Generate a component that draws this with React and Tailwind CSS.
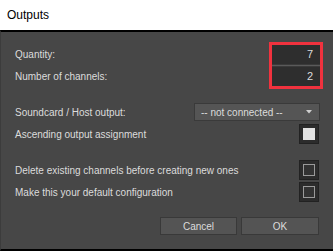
import React from 'react';

function Check({ on }) {
  return (
    <div className="w-[20px] h-[20px] bg-[#2c2c2c] border border-[#222] flex items-center justify-center">
      {on ? (
        <div className="w-[12px] h-[12px] bg-[#e2e2e2]" />
      ) : (
        <div className="w-[12px] h-[12px] border border-[#9a9a9a] bg-[#333]" />
      )}
    </div>
  );
}

function Row({ label, children, className = '' }) {
  return (
    <div className={`flex items-center justify-between ${className}`}>
      <span>{label}</span>
      {children}
    </div>
  );
}

export default function App() {
  return (
    <div className="w-[333px] h-[251px] flex flex-col bg-white overflow-hidden">
      <div className="h-[30px] shrink-0 flex items-center pl-[7px] text-[12px] text-black font-['Liberation_Sans',sans-serif]">
        Outputs
      </div>
      <div className="flex-1 flex flex-col bg-[#474747] border-t-2 border-b-2 border-black border-l border-l-[#3c3c3c] pl-[14px] pr-[14px] pt-[10px] text-[10px] text-[#dcdcdc] font-['Liberation_Sans',sans-serif]">
        {/* quantity + channels */}
        <div className="flex justify-between">
          <div className="flex flex-col pt-[3px] gap-[3px]">
            <div className="h-[19px] flex items-center">Quantity:</div>
            <div className="h-[19px] flex items-center">Number of channels:</div>
          </div>
          <div className="w-[54px] -mr-[4px] border-[3px] border-[#f0323e] flex flex-col">
            <div className="h-[19px] bg-[#2e2e2e] flex items-center justify-end pr-[7px] text-[11px]">7</div>
            <div className="h-[3px] bg-[#5a5a5a] border-y border-[#3a3a3a]" />
            <div className="h-[19px] bg-[#2e2e2e] flex items-center justify-end pr-[7px] text-[11px]">2</div>
          </div>
        </div>

        <Row label="Soundcard / Host output:" className="mt-[14px]">
          <div className="w-[126px] h-[18px] bg-[#555] border border-[#3a3a3a] flex items-center justify-between pl-[6px] pr-[7px] -mr-[1px]">
            <span>-- not connected --</span>
            <svg width="6" height="4" viewBox="0 0 6 4">
              <path d="M0 0h6L3 3.5z" fill="#cfcfcf" />
            </svg>
          </div>
        </Row>

        <Row label="Ascending output assignment" className="mt-[3px]">
          <Check on />
        </Row>

        <Row label="Delete existing channels before creating new ones" className="mt-[16px]">
          <Check />
        </Row>

        <Row label="Make this your default configuration" className="mt-[2px]">
          <Check />
        </Row>

        <div className="flex justify-end gap-[4px] mt-[15px]">
          <button className="w-[77px] h-[18px] bg-[#545454] border border-[#393939] text-[#dcdcdc] text-[10px] flex items-center justify-center">
            Cancel
          </button>
          <button className="w-[78px] h-[18px] bg-[#545454] border border-[#393939] text-[#dcdcdc] text-[10px] flex items-center justify-center">
            OK
          </button>
        </div>
      </div>
    </div>
  );
}
